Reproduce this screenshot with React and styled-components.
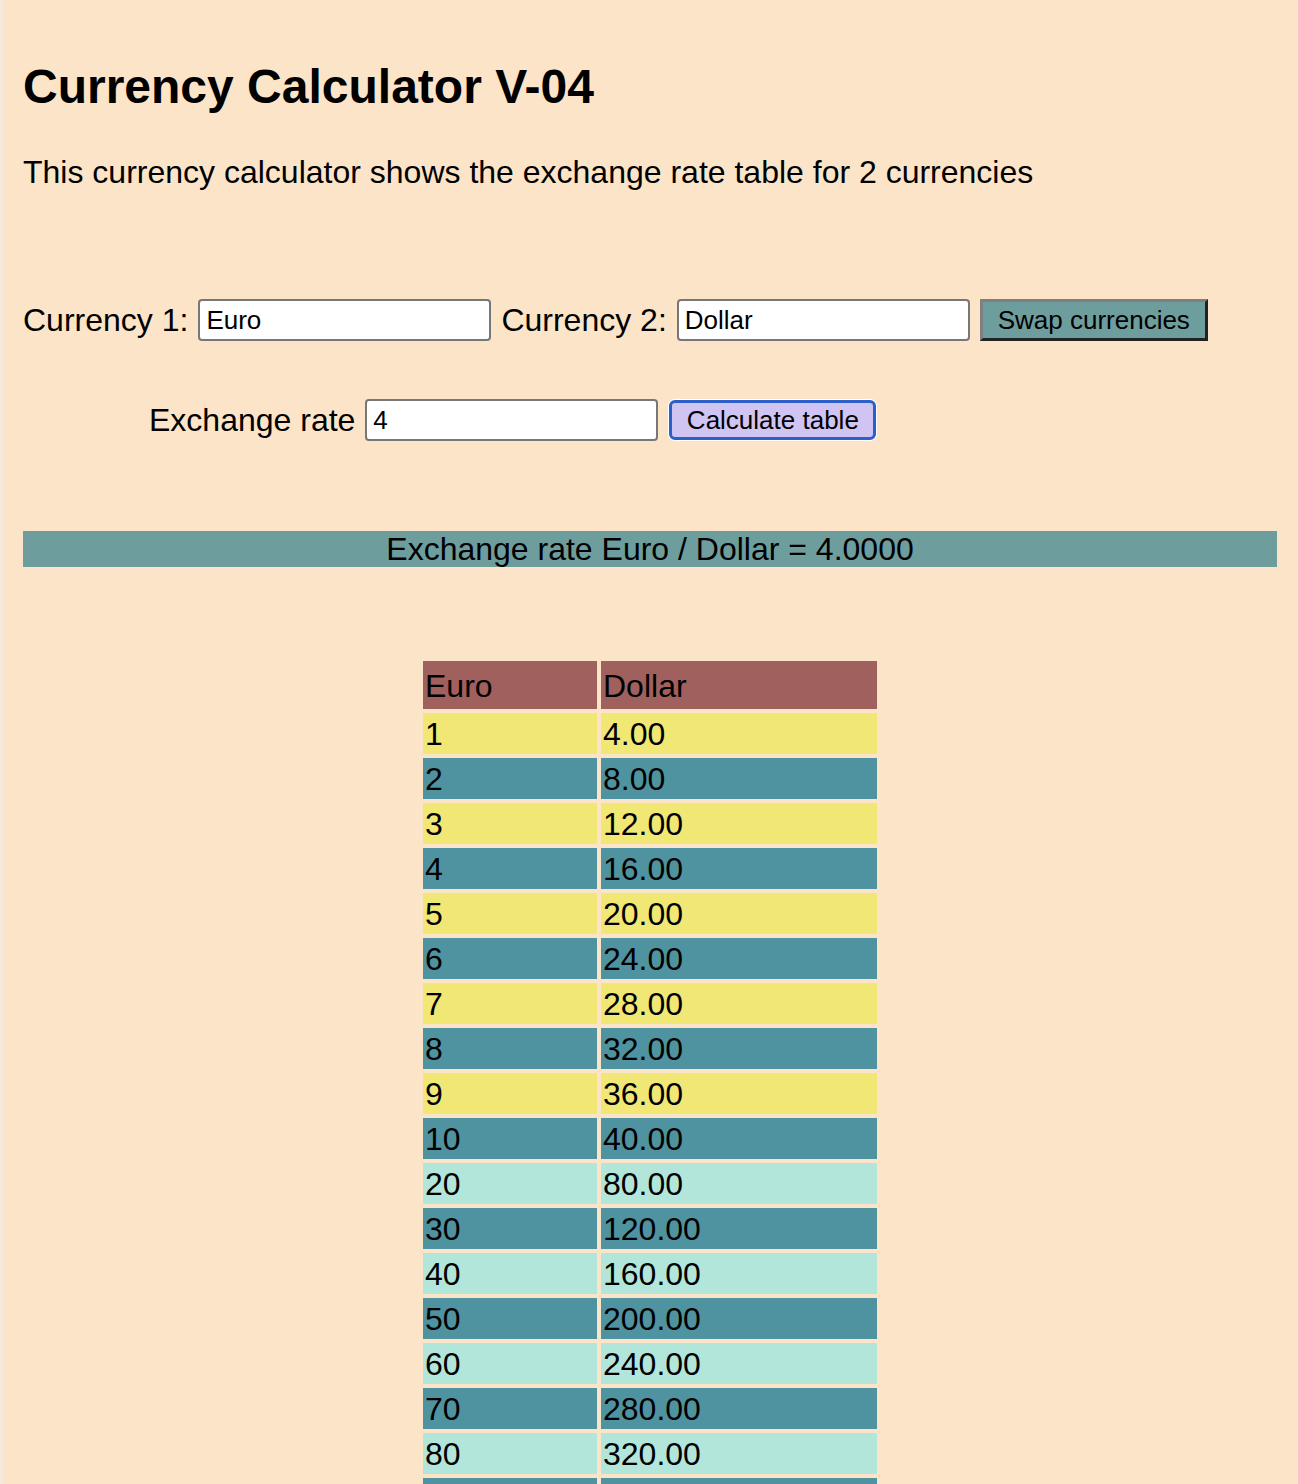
import React from 'react';
import styled, { createGlobalStyle } from 'styled-components';

const GlobalStyle = createGlobalStyle`
  html, body {
    margin: 0;
    padding: 0;
    background: #fbe4c8;
  }
  body {
    border-left: 3px solid #f6e9db;
    font-family: "Liberation Sans", Arial, Helvetica, sans-serif;
    color: #000;
  }
`;

const Page = styled.div`
  padding: 0 21px 40px 20px;
  font-size: 32px;
`;

const Title = styled.h1`
  margin: 59px 0 0;
  font-size: 48px;
  line-height: 55px;
  font-weight: bold;
`;

const Intro = styled.p`
  margin: 40px 0 0;
  line-height: 37px;
`;

const FormRow = styled.div`
  display: flex;
  align-items: center;
  gap: 10px;
  height: 42px;
  margin-top: ${(p) => p.$top}px;
  padding-left: ${(p) => p.$indent || 0}px;
`;

const Label = styled.label`
  line-height: 37px;
  white-space: nowrap;
`;

const TextInput = styled.input`
  box-sizing: border-box;
  width: 293px;
  height: 42px;
  padding: 0 6px;
  border: 2px solid #777;
  border-radius: 4px;
  background: #fff;
  font-family: inherit;
  font-size: 26px;
  color: #000;
`;

const SwapButton = styled.button`
  box-sizing: border-box;
  width: 228px;
  height: 42px;
  background: #6e9d9d;
  border: 3px solid;
  border-color: #7f7f7f #222 #222 #7f7f7f;
  font-family: inherit;
  font-size: 26px;
  color: #000;
  padding: 0;
`;

const CalcButton = styled.button`
  box-sizing: border-box;
  width: 207px;
  height: 40px;
  margin-left: 1px;
  background: #d0c4f3;
  border: 3px solid #2c5fca;
  border-radius: 6px;
  box-shadow: 0 0 0 1px #fff;
  font-family: inherit;
  font-size: 26px;
  color: #000;
  padding: 0;
`;

const RateBar = styled.div`
  margin-top: 90px;
  height: 36px;
  line-height: 37px;
  background: #6e9d9d;
  text-align: center;
`;

const RateTable = styled.table`
  margin: 90px auto 0;
  border-collapse: separate;
  border-spacing: 4px;
  font-size: 32px;
`;

const HeadCell = styled.th`
  width: ${(p) => p.$w}px;
  height: 48px;
  padding: 2px 2px 0;
  box-sizing: border-box;
  background: #a0605d;
  font-weight: normal;
  text-align: left;
  line-height: 37px;
`;

const rowColors = {
  yellow: '#f0e775',
  teal: '#4f93a0',
  mint: '#b3e6da',
};

const Cell = styled.td`
  height: 41px;
  padding: 2px 2px 0;
  box-sizing: border-box;
  background: ${(p) => rowColors[p.$tone]};
  line-height: 37px;
`;

const rate = 4;
const amounts = [1, 2, 3, 4, 5, 6, 7, 8, 9, 10, 20, 30, 40, 50, 60, 70, 80, 90, 100];

const toneFor = (n, i) => {
  if (i % 2 === 1) return 'teal';
  return n <= 10 ? 'yellow' : 'mint';
};

const App = () => {
  return (
    <Page>
      <GlobalStyle />
      <Title>Currency Calculator V-04</Title>
      <Intro>This currency calculator shows the exchange rate table for 2 currencies</Intro>

      <FormRow $top={108}>
        <Label>Currency 1:</Label>
        <TextInput defaultValue="Euro" />
        <Label>Currency 2:</Label>
        <TextInput defaultValue="Dollar" />
        <SwapButton>Swap currencies</SwapButton>
      </FormRow>

      <FormRow $top={58} $indent={126}>
        <Label>Exchange rate</Label>
        <TextInput defaultValue="4" />
        <CalcButton>Calculate table</CalcButton>
      </FormRow>

      <RateBar>Exchange rate Euro / Dollar = {rate.toFixed(4)}</RateBar>

      <RateTable>
        <thead>
          <tr>
            <HeadCell $w={174}>Euro</HeadCell>
            <HeadCell $w={276}>Dollar</HeadCell>
          </tr>
        </thead>
        <tbody>
          {amounts.map((n, i) => (
            <tr key={n}>
              <Cell $tone={toneFor(n, i)}>{n}</Cell>
              <Cell $tone={toneFor(n, i)}>{(n * rate).toFixed(2)}</Cell>
            </tr>
          ))}
        </tbody>
      </RateTable>
    </Page>
  );
};

export default App;
